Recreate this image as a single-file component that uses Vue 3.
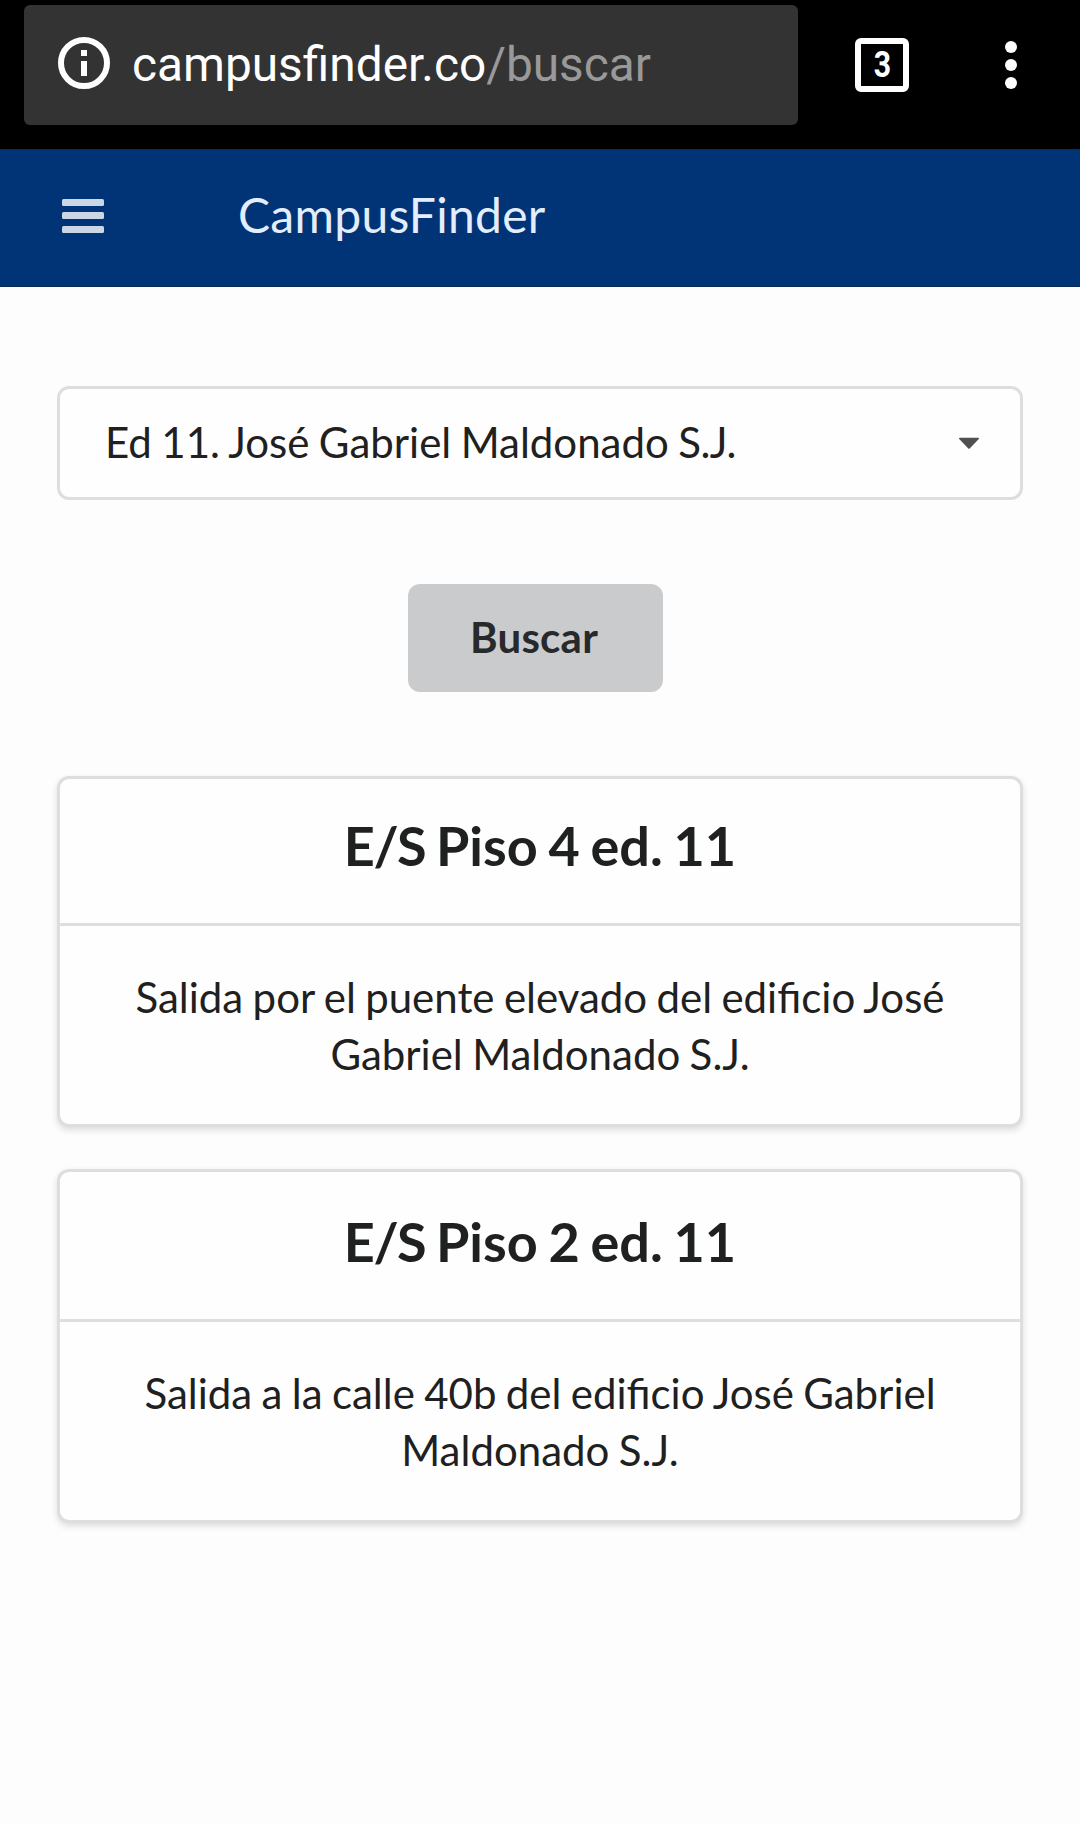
<script setup>
const results = [
  {
    kind: 'E/S',
    name: 'Piso 4 ed. 11',
    description: 'Salida por el puente elevado del edificio José Gabriel Maldonado S.J.',
  },
  {
    kind: 'E/S',
    name: 'Piso 2 ed. 11',
    description: 'Salida a la calle 40b del edificio José Gabriel Maldonado S.J.',
  },
]
</script>

<template>
  <div class="screen">
    <div class="browser">
      <div class="address">
        <svg class="info" viewBox="0 0 52 52" aria-hidden="true">
          <circle cx="26" cy="26" r="23" fill="none" stroke="#fff" stroke-width="6" />
          <path d="M23 13h6v6h-6zM23 24h6v15h-6z" fill="#fff" />
        </svg>
        <span class="url">campusfinder.co<span class="path">/buscar</span></span>
      </div>
      <div class="tabs"><span>3</span></div>
      <svg class="dots" viewBox="0 0 12 48" aria-hidden="true">
        <circle cx="6" cy="6" r="6" />
        <circle cx="6" cy="24" r="6" />
        <circle cx="6" cy="42" r="6" />
      </svg>
    </div>

    <header class="navbar">
      <svg class="menu" viewBox="0 0 42 34" aria-hidden="true">
        <rect width="42" height="7" rx="1.5" />
        <rect y="13" width="42" height="7" rx="1.5" />
        <rect y="27" width="42" height="7" rx="1.5" />
      </svg>
      <span class="brand">CampusFinder</span>
    </header>

    <main class="content">
      <div class="dropdown">
        <span class="selected">Ed 11. José Gabriel Maldonado <span class="initials">S.J.</span></span>
        <svg class="caret" viewBox="0 0 22 13" aria-hidden="true">
          <path d="M1.6 0.7h18.8q1 .5.4 1.4l-9.1 9.4q-.7.6-1.4 0L1.2 2.1Q.6 1.2 1.6.7z" />
        </svg>
      </div>

      <button class="search" type="button">Buscar</button>

      <section class="cards">
        <article v-for="item in results" :key="item.name" class="card">
          <h2 class="card-title"><span class="kind">{{ item.kind }}</span> {{ item.name }}</h2>
          <p class="card-text">{{ item.description }}</p>
        </article>
      </section>
    </main>
  </div>
</template>

<style>
body {
  margin: 0;
  background: #fdfdfd;
}
</style>

<style scoped>
.screen {
  box-sizing: border-box;
  width: 1080px;
  height: 1824px;
  overflow: hidden;
  background: #fdfdfd;
  color: #1f2020;
  font-family: Lato, sans-serif;
  font-size: 42px;
}

.browser {
  box-sizing: border-box;
  display: flex;
  height: 149px;
  padding: 5px 0 0 24px;
  background: #000;
  font-family: Roboto, sans-serif;
}

.address {
  box-sizing: border-box;
  display: flex;
  align-items: flex-start;
  width: 774px;
  height: 120px;
  padding: 32px 0 0 34px;
  border-radius: 6px;
  background: #333;
}

.info {
  width: 52px;
  height: 52px;
}

.url {
  margin: 0 0 0 22px;
  color: #fff;
  font-size: 47.8px;
  line-height: 56px;
  white-space: nowrap;
}

.path {
  color: #999;
}

.tabs {
  box-sizing: border-box;
  display: flex;
  align-items: center;
  justify-content: center;
  width: 54px;
  height: 54px;
  margin: 33px 0 0 57px;
  border: 6px solid #fff;
  border-radius: 6px;
  color: #fff;
  font-size: 36px;
  font-weight: 700;
  line-height: 42px;
}

.tabs span {
  transform: scaleX(0.84);
}

.dots {
  width: 12px;
  height: 48px;
  margin: 36px 0 0 96px;
  fill: #fff;
}

.navbar {
  box-sizing: border-box;
  display: flex;
  align-items: flex-start;
  height: 138px;
  padding: 50px 0 0 62px;
  border-top: 1px solid #0b2b57;
  border-bottom: 1px solid #0b2b57;
  background: #003476;
}

.menu {
  width: 42px;
  height: 34px;
  margin-top: -1px;
  fill: #ccd7e5;
}

.brand {
  margin: -14px 0 0 134px;
  color: #e3edfb;
  font-size: 48px;
  letter-spacing: 0.28px;
  line-height: 58px;
}

.content {
  display: flex;
  flex-direction: column;
  padding: 99px 57px 0;
}

.dropdown {
  box-sizing: border-box;
  display: flex;
  align-items: center;
  justify-content: space-between;
  height: 114px;
  padding: 0 40px 0 45px;
  border: 3px solid #dedede;
  border-radius: 12px;
  background: #fefefe;
}

.selected {
  padding-bottom: 2px;
  word-spacing: -1.3px;
}

.initials {
  letter-spacing: -0.6px;
}

.caret {
  width: 22px;
  height: 13px;
  fill: #505050;
}

.search {
  align-self: center;
  width: 255px;
  height: 108px;
  margin: 84px 9px 84px 0;
  padding: 0 3px 2px 0;
  border: 0;
  border-radius: 12px;
  background: #cacbcd;
  color: #27292a;
  font: 700 42px/42px Lato, sans-serif;
  letter-spacing: 0.25px;
}

.cards {
  display: flex;
  flex-direction: column;
  gap: 42px;
}

.card {
  border: 3px solid #dedede;
  border-radius: 12px;
  background: #fefefe;
  box-shadow: 0 3px 6px rgba(34, 36, 38, 0.15);
  text-align: center;
}

.card-title {
  margin: 0;
  padding: 35px 42px 43px;
  border-bottom: 3px solid #dedede;
  font-size: 54px;
  font-weight: 700;
  line-height: 69px;
  word-spacing: -2.4px;
}

.card:first-child .card-title {
  padding-top: 32px;
}

.kind {
  letter-spacing: -1.5px;
}

.card-text {
  margin: 0;
  padding: 43px 42px 41px;
  line-height: 57px;
  word-spacing: -1.4px;
}
</style>
